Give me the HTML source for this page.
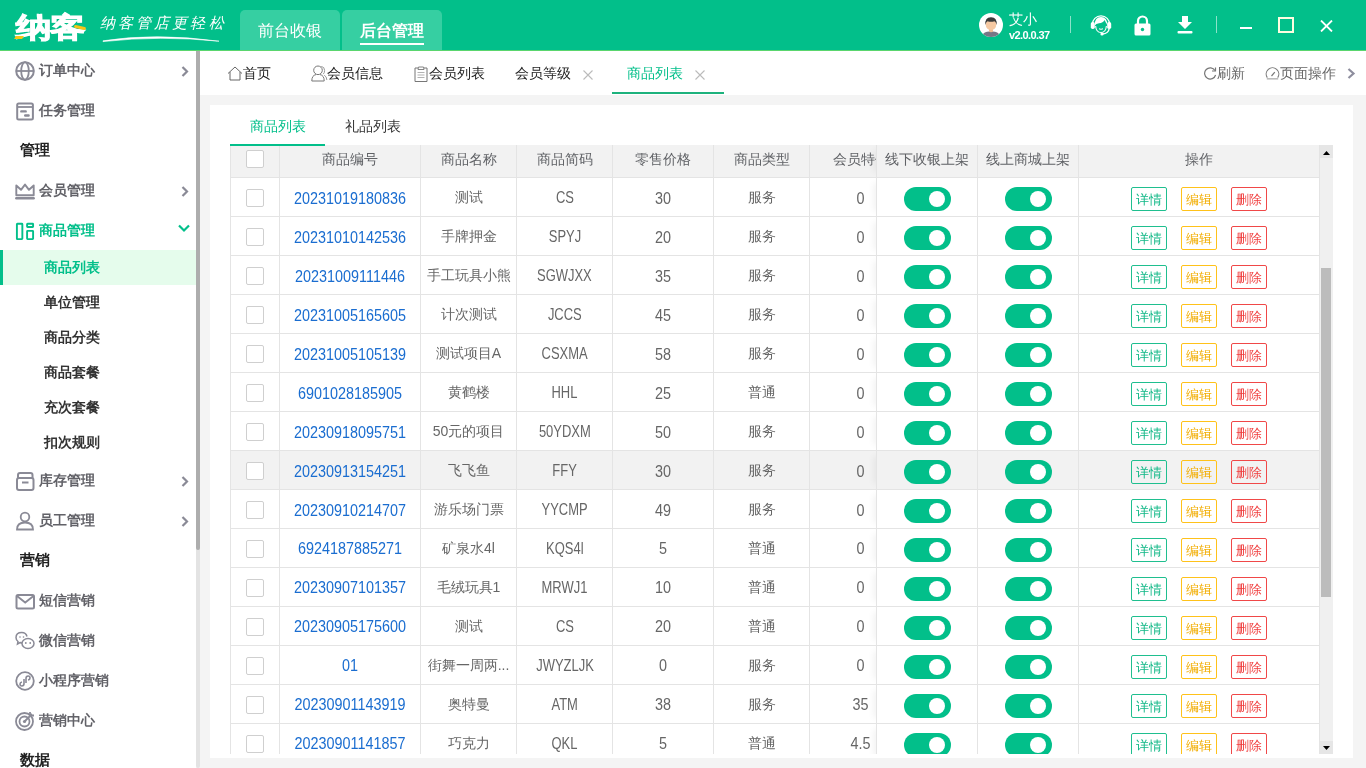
<!DOCTYPE html>
<html><head><meta charset="utf-8"><style>
*{margin:0;padding:0;box-sizing:border-box}
html,body{width:1366px;height:768px;overflow:hidden;background:#f4f4f4;font-family:"Liberation Sans",sans-serif;font-size:14px;color:#606266}
.abs{position:absolute}
/* header */
#hd{position:absolute;left:0;top:0;width:1366px;height:51px;background:#02bf8a;border-bottom:1px solid #5ad66e}
.logo{position:absolute;left:16px;top:11px;font-size:28px;font-weight:900;color:#fff;letter-spacing:-1px;line-height:34px;-webkit-text-stroke:1px #fff;transform:scaleX(1.27);transform-origin:0 0}
.slogan{position:absolute;left:100px;top:13px;font-size:15px;color:#fff;font-style:italic;letter-spacing:3.1px;line-height:20px;font-weight:normal;font-family:"Liberation Serif",serif}
.htab{position:absolute;top:10px;height:40px;width:100px;background:#36cfa2;border-radius:5px 5px 0 0;color:#fff;font-size:16px;text-align:center;line-height:42px;font-weight:500}
.htab.on{font-weight:bold}
.htab.on u{text-decoration:none;display:inline-block;border-bottom:2px solid #fff;line-height:20px;padding-bottom:2px}
.avatar{position:absolute;left:979px;top:13px;width:24px;height:24px;border-radius:50%;background:#fff;overflow:hidden}
.uname{position:absolute;left:1009px;top:10px;color:#fff;font-size:14px;line-height:18px}
.ver{position:absolute;left:1009px;top:29px;color:#fff;font-size:11px;font-weight:bold;line-height:13px;letter-spacing:-0.6px}
.vsep{position:absolute;top:16px;width:1px;height:17px;background:rgba(255,255,255,.55)}
/* sidebar */
#sb{position:absolute;left:0;top:51px;width:196px;height:717px;background:#fff;overflow:hidden}
#sbscroll{position:absolute;left:196px;top:51px;width:4px;height:717px;background:#e3e3e3;border-radius:0 0 2px 2px}
#sbthumb{position:absolute;left:196px;top:51px;width:4px;height:499px;background:#adadad;border-radius:0 0 2px 2px}
.mi{position:absolute;left:0;width:196px;height:40px;line-height:40px;font-size:14px;font-weight:bold;color:#626268}
.mi .tx{position:absolute;left:39px;top:0}
.mi svg{position:absolute;left:15px;top:11px}
.mi .chev{position:absolute;left:181px;top:16px}
.mh{position:absolute;left:20px;height:40px;line-height:40px;font-size:15px;font-weight:bold;color:#222}
.si{position:absolute;left:0;width:196px;height:35px;line-height:35px;font-size:14px;font-weight:bold;color:#333}
.si .tx{position:absolute;left:44px}
.si.on{background:#e5fcec;color:#02bf8a;border-left:3px solid #02bf8a}
.si.on .tx{left:41px}
.mi.on{color:#02bf8a}
/* tabbar */
#tb{position:absolute;left:200px;top:51px;width:1166px;height:44px;background:#fff}
.tt{position:absolute;top:0;height:44px;line-height:44px;font-size:14px;color:#222;white-space:nowrap}
.tt svg{position:absolute}
.tt.on{color:#02bf8a}
.x{position:absolute;top:0;line-height:44px;font-size:14px;color:#b8b8b8}
/* card */
#card{position:absolute;left:210px;top:105px;width:1143px;height:653px;background:#fff}
.itab{position:absolute;top:105px;height:39px;line-height:42px;font-size:14px;color:#333}
.itab.on{color:#02bf8a}
#iline{position:absolute;left:230px;top:144px;width:95px;height:2px;background:#02bf8a}
/* table */
#tbl{position:absolute;left:230px;top:145px;width:1090px;height:609px;overflow:hidden;border-left:1px solid #e4e4e4}
#th{position:absolute;left:0;top:0;width:1089px;height:33px;background:#f2f2f2;border-bottom:1px solid #e4e4e4}
.row{position:absolute;left:0;width:1089px;height:39px;border-bottom:1px solid #e4e4e4;background:#fff}
.row.hov{background:#f2f2f2}
.c{position:absolute;top:0;height:38px;line-height:38px;text-align:center;border-right:1px solid #e4e4e4;font-size:14px;color:#606266;white-space:nowrap;overflow:hidden}
#th .c{height:32px;line-height:28px;color:#606266}
.c0{left:0;width:49px}
.c1{left:49px;width:141px}
.c2{left:190px;width:96px}
.c3{left:286px;width:96px}
.c4{left:382px;width:101px}
.c5{left:483px;width:96px}
.c6{left:579px;width:101px;border-right:none}
.c7{left:645px;width:102px;border-left:1px solid #e4e4e4;background:inherit}
.c8,.c9{background:inherit}
.c8{left:747px;width:101px}
.c9{left:848px;width:241px}
.c7{box-shadow:-7px 0 7px -5px rgba(0,0,0,.06)}
.cb{display:inline-block;width:18px;height:18px;border:1px solid #cfcfcf;border-radius:2px;background:#fff;vertical-align:middle;margin-top:-3px}
.lnk{color:#1e6fd0}
.sw{display:inline-block;position:relative;top:1px;width:47px;height:24px;border-radius:12px;background:#02bf8a;vertical-align:middle;margin-top:0}
.sw i{position:absolute;right:6px;top:4px;width:16px;height:16px;border-radius:50%;background:#fff}
.bt{display:inline-block;width:36px;height:24px;line-height:22px;border:1px solid;border-radius:2px;font-size:12px;vertical-align:middle;margin:0 7px;margin-top:0;position:relative;left:0;top:1px}
.bt.g{color:#1fbf8f;border-color:#1fbf8f}
.bt.y{color:#f5b400;border-color:#ffc21a}
.bt.r{color:#f04848;border-color:#f04848}
#vs{position:absolute;left:1320px;top:145px;width:13px;height:609px;background:#f0f0f0}
#vthumb{position:absolute;left:1321px;top:268px;width:10px;height:329px;background:#bcbcbc}
.row .c1,.row .c3,.row .c4,.row .c6{font-size:14.4px}
.row .cb{position:relative;top:1px}
#iline{z-index:5}
.lnk{color:#1a6dd0}

.n{display:inline-block;transform:translateY(1px) scaleY(1.1)}
.row .c3{font-size:14px}
#root{position:absolute;left:0;top:0;width:1366px;height:768px;overflow:hidden;will-change:transform}
.c{color:#666}
.row .c3{font-size:14.4px}
.row .c3 .n{transform:translateY(0.5px) scaleX(0.9) scaleY(1.1)}
.row .c2,.row .c5{font-weight:500}
.bt{font-weight:500}
.bt.g{color:#12b887;border-color:#1fbf8f}
.bt.y{color:#f2ad00;border-color:#ffc21a}
.bt.r{color:#f03c3c;border-color:#f04848}
.bt{line-height:20px;padding-top:2px;font-size:12.5px}

</style></head><body><div id="root">
<div id="hd">
  <div class="logo">纳客</div><div class="abs" style="left:15px;top:36px;width:8px;height:3px;background:#f5c518;transform:skewX(-30deg)"></div><div class="abs" style="left:74px;top:26px;width:12px;height:3px;background:#f5c518;border-radius:2px;transform:rotate(12deg)"></div>
  <div class="slogan">纳客管店更轻松</div>
  <svg class="abs" style="left:100px;top:33px" width="124" height="10" viewBox="0 0 124 10"><path d="M3 7.8 Q55 -0.5 119 8.2 Q60 2.2 3 8.6Z" fill="#fff" stroke="#fff" stroke-width="0.6" stroke-linejoin="round"/></svg>
  <div class="htab" style="left:240px">前台收银</div>
  <div class="htab on" style="left:342px"><u>后台管理</u></div>
  <div class="avatar"><svg width="24" height="24" viewBox="0 0 24 24"><rect x="10" y="15" width="4" height="5" fill="#f0bd95"/><ellipse cx="12" cy="11.5" rx="5.3" ry="5.6" fill="#f5c8a2"/><path d="M6.4 12 Q5.6 4.2 12 4.3 Q18.4 4.2 17.6 12 Q17 8.6 15.5 8.2 Q12 9.2 8.5 8.2 Q7 8.6 6.4 12Z" fill="#3b3b3b"/><path d="M2.5 24 Q4 18.8 9.5 18.4 Q12 20 14.5 18.4 Q20 18.8 21.5 24Z" fill="#777786"/></svg></div>
  <div class="uname">艾小</div>
  <div class="ver">v2.0.0.37</div>
  <div class="vsep" style="left:1070px"></div>
  <svg class="abs" style="left:1090px;top:13px" width="22" height="23" viewBox="0 0 22 22"><path d="M2.3 11 A8.7 8.7 0 0 1 19.7 11" stroke="#fff" stroke-width="1.3" fill="none"/><rect x="0.8" y="8.5" width="4" height="7" rx="1.8" fill="#fff"/><rect x="17.2" y="8.5" width="4" height="7" rx="1.8" fill="#fff"/><path d="M4.5 12.5 Q4.5 3.5 11 3.5 Q17.5 3.5 17.5 12.5 Q16.5 9.5 15.5 8.5 L14.8 6.5 Q13 9.5 9 9.8 Q6 10 4.5 12.5Z" fill="#fff"/><path d="M5.6 12.5 Q6.2 19 11 19 Q15.8 19 16.4 12.5" stroke="#fff" stroke-width="1.1" fill="none"/><path d="M9 15.3 Q11 16.3 13 15.3" stroke="#fff" stroke-width="1" fill="none"/><path d="M19.2 15 Q18.5 20 12.5 20.5" stroke="#fff" stroke-width="1.4" fill="none"/><circle cx="12" cy="20.5" r="1.6" fill="#fff"/></svg>
  <svg class="abs" style="left:1134px;top:15px" width="17" height="21" viewBox="0 0 17 21"><path d="M4 9 V6 A4.5 4.5 0 0 1 13 6 V9" stroke="#fff" stroke-width="2.2" fill="none"/><rect x="0.5" y="8.5" width="16" height="12" rx="1.5" fill="#fff"/><circle cx="8.5" cy="14.5" r="1.7" fill="#02bf8a"/></svg>
  <svg class="abs" style="left:1177px;top:16px" width="16" height="18" viewBox="0 0 16 18"><path d="M5 0 H11 V6 H15 L8 13 L1 6 H5Z" fill="#fff"/><rect x="0.5" y="15" width="15" height="2.5" rx="1" fill="#fff"/></svg>
  <div class="vsep" style="left:1216px"></div>
  <div class="abs" style="left:1240px;top:27px;width:12px;height:2px;background:#fff"></div>
  <div class="abs" style="left:1278px;top:17px;width:16px;height:16px;border:2px solid #fdfde0"></div>
  <svg class="abs" style="left:1320px;top:20px" width="13" height="12" viewBox="0 0 13 12"><path d="M1 0.5 L12 11.5 M12 0.5 L1 11.5" stroke="#fff" stroke-width="1.8"/></svg>
</div>

<div id="sb">
  <div class="mi" style="top:-1px"><svg width="20" height="20" viewBox="0 0 20 20"><circle cx="10" cy="10" r="8.8" stroke="#8a8a96" stroke-width="2" fill="none"/><ellipse cx="10" cy="10" rx="3.8" ry="8.8" stroke="#8a8a96" stroke-width="1.8" fill="none"/><path d="M1.5 10 H18.5" stroke="#8a8a96" stroke-width="1.8"/></svg><span class="tx">订单中心</span><svg class="chev" width="8" height="11" viewBox="0 0 8 11"><path d="M1.5 1 L6 5.5 L1.5 10" stroke="#8a8a96" stroke-width="2.2" fill="none"/></svg></div>
  <div class="mi" style="top:39px"><svg width="20" height="20" viewBox="0 0 20 20"><rect x="2.2" y="2.4" width="15.7" height="16.1" rx="1.5" stroke="#8a8a96" stroke-width="2" fill="none"/><path d="M2.2 6 H17.9" stroke="#8a8a96" stroke-width="1.8"/><path d="M6.3 10.4 H10.7 M10.2 14.5 H13.6" stroke="#8a8a96" stroke-width="2.4" stroke-linecap="round"/></svg><span class="tx">任务管理</span></div>
  <div class="mh" style="top:79px">管理</div>
  <div class="mi" style="top:119px"><svg width="20" height="20" viewBox="0 0 20 20"><path d="M1.3 14.2 V4.5 L6 8.8 L10 3.6 L14 8.8 L18.7 4.5 V14.2Z" stroke="#8a8a96" stroke-width="1.9" fill="none" stroke-linejoin="round"/><path d="M1.3 17.3 H18.7" stroke="#8a8a96" stroke-width="2.4" stroke-linecap="round"/></svg><span class="tx">会员管理</span><svg class="chev" width="8" height="11" viewBox="0 0 8 11"><path d="M1.5 1 L6 5.5 L1.5 10" stroke="#8a8a96" stroke-width="2.2" fill="none"/></svg></div>
  <div class="mi on" style="top:159px"><svg width="20" height="20" viewBox="0 0 20 20"><rect x="1.9" y="2.8" width="5.45" height="15.3" rx="0.5" stroke="#02bf8a" stroke-width="1.9" fill="none"/><rect x="12.1" y="2.8" width="6" height="3.2" rx="0.5" stroke="#02bf8a" stroke-width="1.9" fill="none"/><rect x="12.1" y="9.9" width="6" height="8.2" rx="0.5" stroke="#02bf8a" stroke-width="1.9" fill="none"/></svg><span class="tx">商品管理</span><svg class="abs" style="left:178px;top:14px" width="12" height="9" viewBox="0 0 12 9"><path d="M1 1.5 L6 6.5 L11 1.5" stroke="#02bf8a" stroke-width="2.2" fill="none"/></svg></div>
  <div class="si on" style="top:199px"><span class="tx">商品列表</span></div>
  <div class="si" style="top:234px"><span class="tx">单位管理</span></div>
  <div class="si" style="top:269px"><span class="tx">商品分类</span></div>
  <div class="si" style="top:304px"><span class="tx">商品套餐</span></div>
  <div class="si" style="top:339px"><span class="tx">充次套餐</span></div>
  <div class="si" style="top:374px"><span class="tx">扣次规则</span></div>
  <div class="mi" style="top:409px"><svg width="20" height="20" viewBox="0 0 20 20"><rect x="2" y="7" width="16.5" height="12" rx="2" stroke="#8a8a96" stroke-width="2" fill="none"/><path d="M3 7 V4 Q3 2 5 2 H15.5 Q17.5 2 17.5 4 V7" stroke="#8a8a96" stroke-width="2" fill="none"/><path d="M7 11.5 H13.5" stroke="#8a8a96" stroke-width="2"/></svg><span class="tx">库存管理</span><svg class="chev" width="8" height="11" viewBox="0 0 8 11"><path d="M1.5 1 L6 5.5 L1.5 10" stroke="#8a8a96" stroke-width="2.2" fill="none"/></svg></div>
  <div class="mi" style="top:449px"><svg width="20" height="20" viewBox="0 0 20 20"><circle cx="10" cy="6" r="4.3" stroke="#8a8a96" stroke-width="1.8" fill="none"/><path d="M2 18.5 Q2 11.5 10 11.5 Q18 11.5 18 18.5Z" stroke="#8a8a96" stroke-width="1.8" fill="none"/></svg><span class="tx">员工管理</span><svg class="chev" width="8" height="11" viewBox="0 0 8 11"><path d="M1.5 1 L6 5.5 L1.5 10" stroke="#8a8a96" stroke-width="2.2" fill="none"/></svg></div>
  <div class="mh" style="top:489px">营销</div>
  <div class="mi" style="top:529px"><svg width="20" height="20" viewBox="0 0 20 20"><rect x="1.5" y="4" width="17.5" height="13.5" rx="1.5" stroke="#8a8a96" stroke-width="2" fill="none"/><path d="M2 5 L10.2 11.5 L18.5 5" stroke="#8a8a96" stroke-width="1.8" fill="none"/></svg><span class="tx">短信营销</span></div>
  <div class="mi" style="top:569px"><svg width="20" height="20" viewBox="0 0 20 20"><path d="M12 5.5 Q11 1.5 6.8 1.5 Q1 1.5 1 6.5 Q1 9 3 10.5 L2.5 13 L5 11.5 Q6 12 7 12" stroke="#8a8a96" stroke-width="1.5" fill="none"/><ellipse cx="13" cy="12.5" rx="6" ry="5" stroke="#8a8a96" stroke-width="1.5" fill="none"/><circle cx="10.8" cy="12" r=".9" fill="#8a8a96"/><circle cx="15.2" cy="12" r=".9" fill="#8a8a96"/><circle cx="5" cy="6" r=".8" fill="#8a8a96"/><circle cx="8.5" cy="6" r=".8" fill="#8a8a96"/></svg><span class="tx">微信营销</span></div>
  <div class="mi" style="top:609px"><svg width="20" height="20" viewBox="0 0 20 20"><circle cx="10" cy="10" r="8.8" stroke="#8a8a96" stroke-width="1.8" fill="none"/><path d="M9 8 V12.5 Q9 15 6.8 15 Q5 15 5 13 Q5 11.3 7 11 M11 12 V7.5 Q11 5 13.2 5 Q15 5 15 7 Q15 8.7 13 9" stroke="#8a8a96" stroke-width="1.6" fill="none"/></svg><span class="tx">小程序营销</span></div>
  <div class="mi" style="top:649px"><svg width="20" height="20" viewBox="0 0 20 20"><circle cx="9.5" cy="10.5" r="8.5" stroke="#8a8a96" stroke-width="1.8" fill="none"/><circle cx="9.5" cy="10.5" r="5" stroke="#8a8a96" stroke-width="1.8" fill="none"/><circle cx="9.5" cy="10.5" r="1.6" fill="#8a8a96"/><path d="M9.5 10.5 L17 3 M15 1 V4.5 H19" stroke="#8a8a96" stroke-width="1.8" fill="none"/></svg><span class="tx">营销中心</span></div>
  <div class="mh" style="top:689px">数据</div>
</div>
<div id="sbscroll"></div>
<div id="sbthumb"></div>

<div id="tb">
  <div class="tt" style="left:27px"><svg style="left:0;top:15px" width="16" height="15" viewBox="0 0 16 15"><path d="M1 7.5 L8 1 L15 7.5 M3 6 V14 H13 V6" stroke="#666" stroke-width="1" fill="none"/></svg><span style="padding-left:16px">首页</span></div>
  <div class="tt" style="left:111px"><svg style="left:0;top:14px" width="17" height="17" viewBox="0 0 17 17"><circle cx="7" cy="5.3" r="4.3" stroke="#777" stroke-width="1" fill="none"/><path d="M0.8 16 Q0.8 10.3 5 9.6 M9 9.6 Q13.2 10.3 13.2 16 H0.8" stroke="#777" stroke-width="1" fill="none"/><path d="M10.3 1.4 Q13.6 1.8 13.6 5.5 Q13.6 8 12.2 9.2 M13.2 10.2 Q15.6 11.2 15.9 15" stroke="#999" stroke-width="1" fill="none"/></svg><span style="padding-left:16px">会员信息</span></div>
  <div class="tt" style="left:214px"><svg style="left:0;top:15px" width="14" height="16" viewBox="0 0 14 16"><path d="M4 2 H1 V15.5 H13 V2 H10" stroke="#777" stroke-width="1" fill="none"/><path d="M4.5 1 H9.5 L10 3.5 H4 Z" stroke="#777" stroke-width="0.9" fill="#fff"/><path d="M3.5 6.5 H10.5 M3.5 9 H10.5 M3.5 11.5 H10.5" stroke="#aaa" stroke-width="0.9"/></svg><span style="padding-left:15px">会员列表</span></div>
  <div class="tt" style="left:315px">会员等级</div>
  <svg class="abs" style="left:383px;top:19px" width="10" height="10" viewBox="0 0 10 10"><path d="M0.5 0.5 L9.5 9.5 M9.5 0.5 L0.5 9.5" stroke="#bbb" stroke-width="1.1"/></svg>
  <div class="tt on" style="left:427px">商品列表</div>
  <svg class="abs" style="left:495px;top:19px" width="10" height="10" viewBox="0 0 10 10"><path d="M0.5 0.5 L9.5 9.5 M9.5 0.5 L0.5 9.5" stroke="#bbb" stroke-width="1.1"/></svg>
  <div class="abs" style="left:412px;top:41px;width:112px;height:2px;background:#1db27d"></div>
  <div class="tt" style="left:1003px;color:#666"><svg style="left:0;top:16px" width="14" height="13" viewBox="0 0 14 13"><path d="M12 3.5 A5.6 5.6 0 1 0 12.6 8" stroke="#777" stroke-width="1.2" fill="none"/><path d="M12.5 0.5 V4 H9" stroke="#777" stroke-width="1.2" fill="none"/></svg><span style="padding-left:14px">刷新</span></div>
  <div class="tt" style="left:1065px;color:#666"><svg style="left:0;top:16px" width="15" height="13" viewBox="0 0 15 13"><path d="M2.3 10.6 A6.3 6.3 0 1 1 12.7 10.6" stroke="#777" stroke-width="1.1" fill="none"/><path d="M6.5 9 L9.8 5.2" stroke="#777" stroke-width="1.2"/><path d="M1.8 11.8 H13.2" stroke="#bbb" stroke-width="1.6"/></svg><span style="padding-left:15px">页面操作</span></div>
  <svg class="abs" style="left:1147px;top:17px" width="9" height="11" viewBox="0 0 9 11"><path d="M1.5 1 L6.5 5.5 L1.5 10" stroke="#8e8e9e" stroke-width="2.2" fill="none"/></svg>
</div>

<div id="card"></div>
<div class="itab on" style="left:250px">商品列表</div>
<div class="itab" style="left:345px">礼品列表</div>
<div id="iline"></div>

<div id="tbl">
  <div id="th">
    <div class="c c0"><span class="cb"></span></div>
    <div class="c c1">商品编号</div>
    <div class="c c2">商品名称</div>
    <div class="c c3">商品简码</div>
    <div class="c c4">零售价格</div>
    <div class="c c5">商品类型</div>
    <div class="c c6">会员特价</div>
    <div class="c c7">线下收银上架</div>
    <div class="c c8">线上商城上架</div>
    <div class="c c9">操作</div>
  </div>
<div class="row" style="top:33px">
<div class="c c0"><span class="cb"></span></div>
<div class="c c1"><span class="lnk n">20231019180836</span></div>
<div class="c c2"><span class="nm">测试</span></div>
<div class="c c3"><span class="n">CS</span></div>
<div class="c c4"><span class="n">30</span></div>
<div class="c c5">服务</div>
<div class="c c6"><span class="n">0</span></div>
<div class="c c7"><span class="sw"><i></i></span></div>
<div class="c c8"><span class="sw"><i></i></span></div>
<div class="c c9"><span class="bt g">详情</span><span class="bt y">编辑</span><span class="bt r">删除</span></div>
</div>
<div class="row" style="top:72px">
<div class="c c0"><span class="cb"></span></div>
<div class="c c1"><span class="lnk n">20231010142536</span></div>
<div class="c c2"><span class="nm">手牌押金</span></div>
<div class="c c3"><span class="n">SPYJ</span></div>
<div class="c c4"><span class="n">20</span></div>
<div class="c c5">服务</div>
<div class="c c6"><span class="n">0</span></div>
<div class="c c7"><span class="sw"><i></i></span></div>
<div class="c c8"><span class="sw"><i></i></span></div>
<div class="c c9"><span class="bt g">详情</span><span class="bt y">编辑</span><span class="bt r">删除</span></div>
</div>
<div class="row" style="top:111px">
<div class="c c0"><span class="cb"></span></div>
<div class="c c1"><span class="lnk n">20231009111446</span></div>
<div class="c c2"><span class="nm">手工玩具小熊</span></div>
<div class="c c3"><span class="n">SGWJXX</span></div>
<div class="c c4"><span class="n">35</span></div>
<div class="c c5">服务</div>
<div class="c c6"><span class="n">0</span></div>
<div class="c c7"><span class="sw"><i></i></span></div>
<div class="c c8"><span class="sw"><i></i></span></div>
<div class="c c9"><span class="bt g">详情</span><span class="bt y">编辑</span><span class="bt r">删除</span></div>
</div>
<div class="row" style="top:150px">
<div class="c c0"><span class="cb"></span></div>
<div class="c c1"><span class="lnk n">20231005165605</span></div>
<div class="c c2"><span class="nm">计次测试</span></div>
<div class="c c3"><span class="n">JCCS</span></div>
<div class="c c4"><span class="n">45</span></div>
<div class="c c5">服务</div>
<div class="c c6"><span class="n">0</span></div>
<div class="c c7"><span class="sw"><i></i></span></div>
<div class="c c8"><span class="sw"><i></i></span></div>
<div class="c c9"><span class="bt g">详情</span><span class="bt y">编辑</span><span class="bt r">删除</span></div>
</div>
<div class="row" style="top:189px">
<div class="c c0"><span class="cb"></span></div>
<div class="c c1"><span class="lnk n">20231005105139</span></div>
<div class="c c2"><span class="nm">测试项目A</span></div>
<div class="c c3"><span class="n">CSXMA</span></div>
<div class="c c4"><span class="n">58</span></div>
<div class="c c5">服务</div>
<div class="c c6"><span class="n">0</span></div>
<div class="c c7"><span class="sw"><i></i></span></div>
<div class="c c8"><span class="sw"><i></i></span></div>
<div class="c c9"><span class="bt g">详情</span><span class="bt y">编辑</span><span class="bt r">删除</span></div>
</div>
<div class="row" style="top:228px">
<div class="c c0"><span class="cb"></span></div>
<div class="c c1"><span class="lnk n">6901028185905</span></div>
<div class="c c2"><span class="nm">黄鹤楼</span></div>
<div class="c c3"><span class="n">HHL</span></div>
<div class="c c4"><span class="n">25</span></div>
<div class="c c5">普通</div>
<div class="c c6"><span class="n">0</span></div>
<div class="c c7"><span class="sw"><i></i></span></div>
<div class="c c8"><span class="sw"><i></i></span></div>
<div class="c c9"><span class="bt g">详情</span><span class="bt y">编辑</span><span class="bt r">删除</span></div>
</div>
<div class="row" style="top:267px">
<div class="c c0"><span class="cb"></span></div>
<div class="c c1"><span class="lnk n">20230918095751</span></div>
<div class="c c2"><span class="nm">50元的项目</span></div>
<div class="c c3"><span class="n">50YDXM</span></div>
<div class="c c4"><span class="n">50</span></div>
<div class="c c5">服务</div>
<div class="c c6"><span class="n">0</span></div>
<div class="c c7"><span class="sw"><i></i></span></div>
<div class="c c8"><span class="sw"><i></i></span></div>
<div class="c c9"><span class="bt g">详情</span><span class="bt y">编辑</span><span class="bt r">删除</span></div>
</div>
<div class="row hov" style="top:306px">
<div class="c c0"><span class="cb"></span></div>
<div class="c c1"><span class="lnk n">20230913154251</span></div>
<div class="c c2"><span class="nm">飞飞鱼</span></div>
<div class="c c3"><span class="n">FFY</span></div>
<div class="c c4"><span class="n">30</span></div>
<div class="c c5">服务</div>
<div class="c c6"><span class="n">0</span></div>
<div class="c c7"><span class="sw"><i></i></span></div>
<div class="c c8"><span class="sw"><i></i></span></div>
<div class="c c9"><span class="bt g">详情</span><span class="bt y">编辑</span><span class="bt r">删除</span></div>
</div>
<div class="row" style="top:345px">
<div class="c c0"><span class="cb"></span></div>
<div class="c c1"><span class="lnk n">20230910214707</span></div>
<div class="c c2"><span class="nm">游乐场门票</span></div>
<div class="c c3"><span class="n">YYCMP</span></div>
<div class="c c4"><span class="n">49</span></div>
<div class="c c5">服务</div>
<div class="c c6"><span class="n">0</span></div>
<div class="c c7"><span class="sw"><i></i></span></div>
<div class="c c8"><span class="sw"><i></i></span></div>
<div class="c c9"><span class="bt g">详情</span><span class="bt y">编辑</span><span class="bt r">删除</span></div>
</div>
<div class="row" style="top:384px">
<div class="c c0"><span class="cb"></span></div>
<div class="c c1"><span class="lnk n">6924187885271</span></div>
<div class="c c2"><span class="nm">矿泉水4l</span></div>
<div class="c c3"><span class="n">KQS4l</span></div>
<div class="c c4"><span class="n">5</span></div>
<div class="c c5">普通</div>
<div class="c c6"><span class="n">0</span></div>
<div class="c c7"><span class="sw"><i></i></span></div>
<div class="c c8"><span class="sw"><i></i></span></div>
<div class="c c9"><span class="bt g">详情</span><span class="bt y">编辑</span><span class="bt r">删除</span></div>
</div>
<div class="row" style="top:423px">
<div class="c c0"><span class="cb"></span></div>
<div class="c c1"><span class="lnk n">20230907101357</span></div>
<div class="c c2"><span class="nm">毛绒玩具1</span></div>
<div class="c c3"><span class="n">MRWJ1</span></div>
<div class="c c4"><span class="n">10</span></div>
<div class="c c5">普通</div>
<div class="c c6"><span class="n">0</span></div>
<div class="c c7"><span class="sw"><i></i></span></div>
<div class="c c8"><span class="sw"><i></i></span></div>
<div class="c c9"><span class="bt g">详情</span><span class="bt y">编辑</span><span class="bt r">删除</span></div>
</div>
<div class="row" style="top:462px">
<div class="c c0"><span class="cb"></span></div>
<div class="c c1"><span class="lnk n">20230905175600</span></div>
<div class="c c2"><span class="nm">测试</span></div>
<div class="c c3"><span class="n">CS</span></div>
<div class="c c4"><span class="n">20</span></div>
<div class="c c5">普通</div>
<div class="c c6"><span class="n">0</span></div>
<div class="c c7"><span class="sw"><i></i></span></div>
<div class="c c8"><span class="sw"><i></i></span></div>
<div class="c c9"><span class="bt g">详情</span><span class="bt y">编辑</span><span class="bt r">删除</span></div>
</div>
<div class="row" style="top:501px">
<div class="c c0"><span class="cb"></span></div>
<div class="c c1"><span class="lnk n">01</span></div>
<div class="c c2"><span class="nm">街舞一周两...</span></div>
<div class="c c3"><span class="n">JWYZLJK</span></div>
<div class="c c4"><span class="n">0</span></div>
<div class="c c5">服务</div>
<div class="c c6"><span class="n">0</span></div>
<div class="c c7"><span class="sw"><i></i></span></div>
<div class="c c8"><span class="sw"><i></i></span></div>
<div class="c c9"><span class="bt g">详情</span><span class="bt y">编辑</span><span class="bt r">删除</span></div>
</div>
<div class="row" style="top:540px">
<div class="c c0"><span class="cb"></span></div>
<div class="c c1"><span class="lnk n">20230901143919</span></div>
<div class="c c2"><span class="nm">奥特曼</span></div>
<div class="c c3"><span class="n">ATM</span></div>
<div class="c c4"><span class="n">38</span></div>
<div class="c c5">服务</div>
<div class="c c6"><span class="n">35</span></div>
<div class="c c7"><span class="sw"><i></i></span></div>
<div class="c c8"><span class="sw"><i></i></span></div>
<div class="c c9"><span class="bt g">详情</span><span class="bt y">编辑</span><span class="bt r">删除</span></div>
</div>
<div class="row" style="top:579px">
<div class="c c0"><span class="cb"></span></div>
<div class="c c1"><span class="lnk n">20230901141857</span></div>
<div class="c c2"><span class="nm">巧克力</span></div>
<div class="c c3"><span class="n">QKL</span></div>
<div class="c c4"><span class="n">5</span></div>
<div class="c c5">普通</div>
<div class="c c6"><span class="n">4.5</span></div>
<div class="c c7"><span class="sw"><i></i></span></div>
<div class="c c8"><span class="sw"><i></i></span></div>
<div class="c c9"><span class="bt g">详情</span><span class="bt y">编辑</span><span class="bt r">删除</span></div>
</div>
</div>
<div id="vs"><div class="abs" style="left:0;top:0;width:13px;height:13px;background:#e6e6e6"></div><div class="abs" style="left:0;top:596px;width:13px;height:13px;background:#e6e6e6"></div><svg class="abs" style="left:3px;top:6px" width="7" height="4" viewBox="0 0 7 4"><path d="M0 4 L3.5 0 L7 4Z" fill="#000"/></svg><svg class="abs" style="left:3px;top:601px" width="7" height="4" viewBox="0 0 7 4"><path d="M0 0 L3.5 4 L7 0Z" fill="#000"/></svg></div>
<div id="vthumb"></div>

</div></body></html>
